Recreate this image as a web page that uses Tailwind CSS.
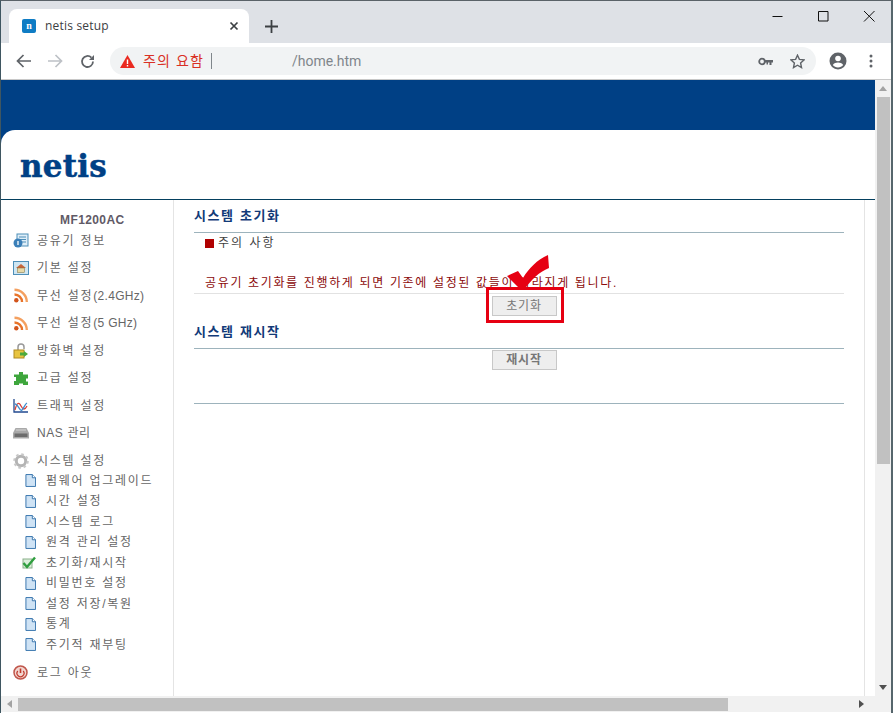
<!DOCTYPE html>
<html lang="ko">
<head>
    <meta charset="UTF-8">
    <meta name="viewport" content="width=device-width, initial-scale=1.0">
    <title>netis setup</title>
    <script src="https://cdn.jsdelivr.net/npm/@tailwindcss/browser@4"></script>
</head>
<body class="w-[893px] h-[713px] overflow-hidden bg-white font-['Liberation_Sans','Noto_Sans_CJK_KR',sans-serif] border-t border-t-[#5a6268] border-l border-l-[#3f5661] border-r-2 border-r-[#56666c] flex flex-col">

    <svg class="hidden">
        <symbol id="doc" viewBox="0 0 12 14">
            <path d="M1 .5h7l3.5 3.5v9.500H1z" fill="#cfe3f5" stroke="#2f6fa8"/>
            <path d="M8 .5V4h3.500" fill="#fff" stroke="#2f6fa8"/>
        </symbol>
        <symbol id="rss" viewBox="0 0 15 15">
            <circle cx="2.800" cy="12.200" r="2.200" fill="#d2541c"/>
            <path d="M1 6.500a7.500 7.500 0 0 1 7.500 7.500" fill="none" stroke="#e8742a" stroke-width="2.400"/>
            <path d="M1 1.800A12.300 12.300 0 0 1 13.300 14" fill="none" stroke="#f4a060" stroke-width="2.400"/>
        </symbol>
    </svg>

    <!-- tab strip -->
    <div class="h-[42px] shrink-0 bg-[#dee1e6] flex items-end relative">
        <div class="ml-[8px] w-[240px] h-[34px] bg-white rounded-t-lg flex items-center pl-[13px] pr-[10px]">
            <span class="w-[14px] h-[14px] rounded-[2px] bg-[#0f7cc4] text-white text-[10px] font-bold leading-[14px] text-center font-['Liberation_Serif',serif]">n</span>
            <span class="ml-[9px] text-[12px] text-[#3c4043] tracking-[0.2px] font-['Open_Sans',sans-serif]">netis setup</span>
            <svg class="ml-auto w-[10px] h-[10px]" viewBox="0 0 10 10"><path d="M1.500 1.500l7 7M8.500 1.500l-7 7" stroke="#3c4043" stroke-width="1.700"/></svg>
        </div>
        <svg class="ml-[16px] mb-[10px] w-[13px] h-[13px]" viewBox="0 0 13 13"><path d="M6.500 0v13M0 6.500h13" stroke="#3c4043" stroke-width="1.800"/></svg>
        <div class="ml-auto mr-[15px] mb-[20px] flex items-center gap-[32px]">
            <svg class="w-[14px] h-[14px]" viewBox="0 0 14 14"><path d="M2.500 7.500h10" stroke="#111" stroke-width="1"/></svg>
            <svg class="w-[14px] h-[14px]" viewBox="0 0 14 14"><path d="M2.500 2.500h9.500v9.500H2.500z" fill="none" stroke="#111" stroke-width="1"/></svg>
            <svg class="w-[14px] h-[14px]" viewBox="0 0 14 14"><path d="M2 2l10.500 10.500M12.500 2L2 12.500" stroke="#111" stroke-width="1"/></svg>
        </div>
    </div>

    <!-- toolbar -->
    <div class="h-[37px] shrink-0 bg-white border-b border-b-[#c8c8c8] flex items-center">
        <svg class="ml-[15px] w-[15px] h-[14px]" viewBox="0 0 15 14"><path d="M15 7H2M7.500 1L1.500 7l6 6" fill="none" stroke="#5f6368" stroke-width="1.700"/></svg>
        <svg class="ml-[17px] w-[15px] h-[14px]" viewBox="0 0 15 14"><path d="M0 7h13M7.500 1l6 6-6 6" fill="none" stroke="#bdc1c6" stroke-width="1.700"/></svg>
        <svg class="ml-[17px] w-[15px] h-[15px]" viewBox="0 0 15 15"><path d="M13 7.500a5.500 5.500 0 1 1-1.600-3.900" fill="none" stroke="#5f6368" stroke-width="1.800"/><path d="M14 1v5H9z" fill="#5f6368"/></svg>
        <div class="ml-[15px] w-[706px] h-[28px] rounded-full bg-[#f1f3f4] flex items-center pl-[10px] pr-[11px]">
            <svg class="w-[15px] h-[13px]" viewBox="0 0 15 13"><path d="M7.500 0L15 13H0z" fill="#ea2a20"/><path d="M6.800 4.500h1.400v4.500H6.800zM6.800 10h1.400v1.500H6.800z" fill="#fff"/></svg>
            <span class="ml-[8px] text-[14px] text-[#d93025] tracking-[1.100px]">주의 요함</span>
            <span class="ml-[7px] w-px h-[16px] bg-[#80868b]"></span>
            <span class="ml-[80px] text-[14px] text-[#80868b] font-['Roboto',sans-serif]">/home.htm</span>
            <svg class="ml-auto w-[15px] h-[9px]" viewBox="0 0 15 9"><circle cx="4" cy="4.500" r="2.800" fill="none" stroke="#5f6368" stroke-width="1.800"/><path d="M6.500 3h8.500v2.500h-1.500V8h-2V5.500h-1.500V7.500H8.500v-2h-2z" fill="#5f6368"/></svg>
            <svg class="ml-[17px] w-[15px] h-[15px]" viewBox="0 0 15 15"><path d="M7.500 1.200l1.900 4.200 4.600.5-3.400 3.100.9 4.500-4-2.300-4 2.300.9-4.500L1 5.900l4.600-.5z" fill="none" stroke="#5f6368" stroke-width="1.400"/></svg>
        </div>
        <svg class="ml-[13px] w-[18px] h-[18px]" viewBox="0 0 18 18"><circle cx="9" cy="9" r="8.500" fill="#5f6368"/><circle cx="9" cy="6.500" r="2.800" fill="#fff"/><path d="M3.800 13c1.200-2 3.200-2.600 5.200-2.600s4 .6 5.200 2.600c-1.200 1.500-3.100 2.400-5.200 2.400s-4-.9-5.200-2.400z" fill="#fff"/></svg>
        <svg class="ml-[22px] w-[4px] h-[14px]" viewBox="0 0 4 14"><circle cx="2" cy="2" r="1.500" fill="#5f6368"/><circle cx="2" cy="7" r="1.500" fill="#5f6368"/><circle cx="2" cy="12" r="1.500" fill="#5f6368"/></svg>
    </div>

    <!-- page viewport -->
    <div class="h-[616px] shrink-0 flex">
        <div class="w-[874px] shrink-0 flex flex-col relative">
            <div class="h-[50px] shrink-0 bg-[#004085]"></div>
            <div class="h-[70px] shrink-0 border-b border-b-[#04405f] relative bg-[#004085]">
                <div class="h-[69px] bg-white rounded-tl-[14px] pl-[19px] pt-[16px]">
                    <span class="text-[31px] leading-[40px] font-bold text-[#004085] tracking-[0.2px] [-webkit-text-stroke:0.5px_#004085] font-['DejaVu_Serif',serif]">netis</span>
                </div>
            </div>

            <div class="flex-1 flex min-h-0">
                <!-- sidebar -->
                <div class="w-[173px] shrink-0 border-r border-r-[#e4e4e4] text-[12px] text-[#666] tracking-[1.750px] pl-[12px]">
                    <div class="h-[20px] pt-[12px] pl-[47px] font-bold text-[#5f5a66] tracking-[0.400px] leading-[16px]">MF1200AC</div>
                    <div class="flex flex-col pt-[7px]">
                        <div class="h-[27.500px] flex items-center gap-[8px]">
                            <svg class="w-[16px] h-[15px]" viewBox="0 0 16 15"><rect x="4" y="1" width="11" height="12" fill="#dfeef8" stroke="#4e8fb8"/><path d="M6 4h7M6 6.500h7M8 9h5" stroke="#4e8fb8"/><circle cx="5" cy="10" r="4.500" fill="#3b7fb8"/><path d="M5 8v4" stroke="#fff" stroke-width="1.300"/></svg>
                            <span>공유기 정보</span>
                        </div>
                        <div class="h-[27.500px] flex items-center gap-[8px]">
                            <svg class="w-[16px] h-[14px]" viewBox="0 0 16 14"><rect x=".5" y=".5" width="15" height="13" fill="#cfe6f2" stroke="#4e8fb8"/><path d="M3 7l5-4 5 4" fill="#c8663a"/><rect x="4.500" y="7" width="7" height="4.500" fill="#e8d9a8" stroke="#7a6a3a" stroke-width=".5"/></svg>
                            <span>기본 설정</span>
                        </div>
                        <div class="h-[27.500px] flex items-center gap-[8px]">
                            <svg class="w-[16px] h-[15px]"><use href="#rss"/></svg>
                            <span>무선 설정<span class="tracking-[0.300px]">(2.4GHz)</span></span>
                        </div>
                        <div class="h-[27.500px] flex items-center gap-[8px]">
                            <svg class="w-[16px] h-[15px]"><use href="#rss"/></svg>
                            <span>무선 설정<span class="tracking-[0.300px]">(5 GHz)</span></span>
                        </div>
                        <div class="h-[27.500px] flex items-center gap-[8px]">
                            <svg class="w-[16px] h-[16px]" viewBox="0 0 16 16"><path d="M5 7V4a3 3 0 0 1 6 0v2" fill="none" stroke="#999" stroke-width="1.500"/><rect x="1" y="7" width="10" height="8" fill="#e8c440" stroke="#b08a20"/><path d="M7 9.500h4V8l4 3-4 3v-1.500H7z" fill="#4caa3c"/></svg>
                            <span>방화벽 설정</span>
                        </div>
                        <div class="h-[27.500px] flex items-center gap-[8px]">
                            <svg class="w-[16px] h-[15px]" viewBox="0 0 16 15"><path d="M6 1h4v2.500h5v4h-2v3h2V14H10v-1.500H6V14H1v-4h2V6H1V3.500h5z" fill="#3ea63c"/></svg>
                            <span>고급 설정</span>
                        </div>
                        <div class="h-[27.500px] flex items-center gap-[8px]">
                            <svg class="w-[16px] h-[15px]" viewBox="0 0 16 15"><path d="M1 1v13h14" fill="none" stroke="#224a90" stroke-width="1.300"/><path d="M2 12c2-8 4-8 6-4s4 4 6 0" fill="none" stroke="#d8413a" stroke-width="1.300"/><path d="M2 6c3 0 5 8 7 6s3-6 5-7" fill="none" stroke="#3e8ed0" stroke-width="1.300"/></svg>
                            <span>트래픽 설정</span>
                        </div>
                        <div class="h-[27.500px] flex items-center gap-[8px]">
                            <svg class="w-[16px] h-[12px]" viewBox="0 0 16 12"><path d="M2.500 1h11L16 6v5.500H0V6z" fill="#a9a9a9"/><rect x="1.500" y="6.500" width="13" height="3.500" fill="#6d6d6d"/><path d="M3 3h10" stroke="#d5d5d5"/></svg>
                            <span class="tracking-[0.600px]">NAS 관리</span>
                        </div>
                        <div class="h-[27.500px] flex items-center gap-[8px]">
                            <svg class="w-[16px] h-[16px]" viewBox="0 0 16 16"><circle cx="8" cy="8" r="4.700" fill="none" stroke="#b4b4b4" stroke-width="3"/><circle cx="8" cy="8" r="6.800" fill="none" stroke="#c8c8c8" stroke-width="2" stroke-dasharray="2.600 2.750"/></svg>
                            <span>시스템 설정</span>
                        </div>
                        <div class="flex flex-col pl-[12px] -mt-[4px]">
                            <div class="h-[20.500px] flex items-center gap-[10px]"><svg class="w-[11px] h-[13px]"><use href="#doc"/></svg><span>펌웨어 업그레이드</span></div>
                            <div class="h-[20.500px] flex items-center gap-[10px]"><svg class="w-[11px] h-[13px]"><use href="#doc"/></svg><span>시간 설정</span></div>
                            <div class="h-[20.500px] flex items-center gap-[10px]"><svg class="w-[11px] h-[13px]"><use href="#doc"/></svg><span>시스템 로그</span></div>
                            <div class="h-[20.500px] flex items-center gap-[10px]"><svg class="w-[11px] h-[13px]"><use href="#doc"/></svg><span>원격 관리 설정</span></div>
                            <div class="h-[20.500px] flex items-center gap-[10px] -ml-[3px]">
                                <svg class="w-[14px] h-[13px]" viewBox="0 0 14 13"><rect x="1" y="3" width="9" height="9" fill="#dbeedb" stroke="#8ab08a"/><path d="M1.500 7l3.500 4L13 1.500" fill="none" stroke="#2f9e3f" stroke-width="2.400"/></svg>
                                <span>초기화/재시작</span>
                            </div>
                            <div class="h-[20.500px] flex items-center gap-[10px]"><svg class="w-[11px] h-[13px]"><use href="#doc"/></svg><span>비밀번호 설정</span></div>
                            <div class="h-[20.500px] flex items-center gap-[10px]"><svg class="w-[11px] h-[13px]"><use href="#doc"/></svg><span>설정 저장/복원</span></div>
                            <div class="h-[20.500px] flex items-center gap-[10px]"><svg class="w-[11px] h-[13px]"><use href="#doc"/></svg><span>통계</span></div>
                            <div class="h-[20.500px] flex items-center gap-[10px]"><svg class="w-[11px] h-[13px]"><use href="#doc"/></svg><span>주기적 재부팅</span></div>
                        </div>
                        <div class="h-[27.500px] mt-[4px] flex items-center gap-[9px]">
                            <svg class="w-[15px] h-[15px]" viewBox="0 0 15 15"><circle cx="7.500" cy="7.500" r="6.500" fill="#f2d6d0" stroke="#c0574c" stroke-width="1.500"/><path d="M7.500 3.500v4.500" stroke="#c0392b" stroke-width="1.600"/><path d="M4.800 6a3.500 3.500 0 1 0 5.400 0" fill="none" stroke="#c0392b" stroke-width="1.200"/></svg>
                            <span>로그 아웃</span>
                        </div>
                    </div>
                </div>

                <!-- content -->
                <div class="w-[691px] shrink-0 border-r border-r-[#e4e4e4] pl-[20px] pr-[20px] text-[12px]">
                    <div class="h-[33px] border-b border-b-[#9db3bc] pt-[8px] font-bold text-[13px] text-[#123a78] tracking-[1.600px] leading-[16px]">시스템 초기화</div>
                    <div class="h-[61px] border-b border-b-[#e2e2e2] pl-[11px] text-[#8c0a0a] tracking-[1.650px] flex flex-col">
                        <div class="flex items-center h-[20px]">
                            <span class="w-[9px] h-[9px] bg-[#b00000]"></span>
                            <span class="ml-[4px] text-[#3f3f3f] tracking-[2px]">주의 사항</span>
                        </div>
                        <div class="mt-[22px] leading-[16px] whitespace-nowrap">공유기 초기화를 진행하게 되면 기존에 설정된 값들이 사라지게 됩니다.</div>
                    </div>
                    <div class="flex justify-center pt-[2px] pl-[10px]">
                        <button class="w-[65px] h-[20px] bg-[#eeeeee] border border-[#c8c8c8] text-[#777] tracking-[0.800px]">초기화</button>
                    </div>
                    <div class="h-[33px] border-b border-b-[#9db3bc] pt-[8px] font-bold text-[13px] text-[#123a78] tracking-[1.600px] leading-[16px]">시스템 재시작</div>
                    <div class="h-[55px] border-b border-b-[#9db3bc] flex justify-center pt-[1px] pl-[10px]">
                        <button class="w-[65px] h-[20px] bg-[#eeeeee] border border-[#c8c8c8] text-[#777] font-bold tracking-[0.800px]">재시작</button>
                    </div>
                </div>
            </div>

            <!-- annotation over the page -->
            <div class="absolute left-[485px] top-[207px] w-[78px] h-[36px] border-[3px] border-[#e60012]"></div>
            <svg class="absolute left-[504px] top-[174px] w-[46px] h-[38px]" viewBox="0 0 46 38">
                <path d="M2 22L13 17 18 24C24 14 32 6 43 1L44 14C34 18 26 26 19 36L16 36z" fill="#e60012"/>
            </svg>
        </div>

        <!-- vertical scrollbar -->
        <div class="w-[16px] shrink-0 bg-[#f1f1f1] flex flex-col items-center">
            <div class="h-[17px] flex items-center"><span class="w-0 h-0 border-x-[4px] border-x-transparent border-b-[5px] border-b-[#a3a3a3]"></span></div>
            <div class="w-[13px] h-[367px] bg-[#c1c1c1]"></div>
            <div class="mt-auto h-[17px] flex items-center"><span class="w-0 h-0 border-x-[4px] border-x-transparent border-t-[5px] border-t-[#505050]"></span></div>
        </div>
    </div>

    <!-- horizontal scrollbar -->
    <div class="h-[16px] shrink-0 bg-[#f1f1f1] flex items-center">
        <div class="w-[17px] flex justify-center"><span class="w-0 h-0 border-y-[4px] border-y-transparent border-r-[5px] border-r-[#a3a3a3]"></span></div>
        <div class="w-[710px] h-[13px] bg-[#c1c1c1]"></div>
        <div class="ml-auto w-[33px] flex justify-start pl-[1px]"><span class="w-0 h-0 border-y-[4px] border-y-transparent border-l-[5px] border-l-[#505050]"></span></div>
    </div>
</body>
</html>
